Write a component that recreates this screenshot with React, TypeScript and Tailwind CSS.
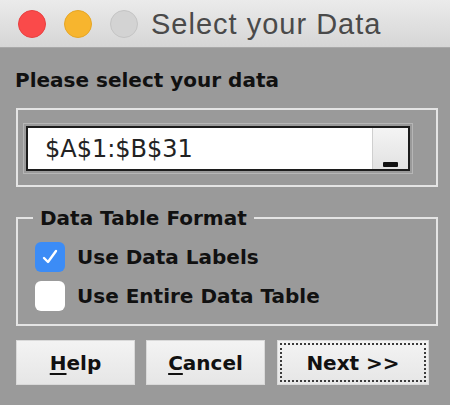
import React from "react";

const sans = { fontFamily: '"DejaVu Sans", Verdana, sans-serif' };

export default function App() {
  return (
    <div className="w-[450px] h-[405px] bg-[#9a9a9a] overflow-hidden" style={sans}>
      {/* Title bar */}
      <div className="h-[48px] flex items-center pl-[18px] bg-gradient-to-b from-[#ebebeb] to-[#d6d6d6] border-b border-[#a8a8a8]">
        <div className="flex items-center gap-[18px]">
          <div className="w-[28px] h-[28px] rounded-full bg-[#fa4a4a] border border-[#e84040]" />
          <div className="w-[28px] h-[28px] rounded-full bg-[#f7b52e] border border-[#e6a625]" />
          <div className="w-[28px] h-[28px] rounded-full bg-[#d3d3d3] border border-[#c4c4c4]" />
        </div>
        <div
          className="ml-[13px] text-[29px] leading-[34px] tracking-[1px] text-[#4a4a4a]"
          style={{ fontFamily: '"Liberation Sans", Arial, sans-serif' }}
        >
          Select your Data
        </div>
      </div>

      {/* Label */}
      <div className="mt-[20px] pl-[15px] text-[20px] leading-[24px] font-bold text-[#111]">
        Please select your data
      </div>

      {/* Range group */}
      <div className="mt-[16px] ml-[16px] w-[422px] h-[79px] border-2 border-[#e4e4e4] pl-[5px] pt-[13px]">
        <div className="w-[390px] border border-[#b6b6b6] p-[2px]">
          <div className="h-[45px] border-2 border-[#1c1c1c] bg-white flex">
            <div className="flex-1 flex items-center pl-[17px] text-[24px] leading-[28px] text-[#222]">
              $A$1:$B$31
            </div>
            <div className="w-[36px] border-l border-[#cfcfcf] bg-gradient-to-b from-[#f4f4f4] to-[#e2e2e2] flex items-end justify-center pb-[2px]">
              <div className="w-[15px] h-[5px] bg-[#111] rounded-[1px]" />
            </div>
          </div>
        </div>
      </div>

      {/* Data Table Format */}
      <fieldset className="mt-[19px] ml-[16px] w-[422px] h-[120px] border-2 border-[#e4e4e4] pl-[17px] pt-[12px]">
        <legend className="ml-[-2px] px-[7px] text-[20px] leading-[24px] font-bold text-[#111]">
          Data Table Format
        </legend>
        <div className="flex flex-col gap-[9px]">
          <div className="flex items-center gap-[12px]">
            <div className="w-[30px] h-[30px] rounded-[6px] bg-[#3c8cf6] flex items-center justify-center">
              <svg width="18" height="18" viewBox="0 0 18 18">
                <path d="M3 10 L7 14 L15 3" fill="none" stroke="white" strokeWidth="2.4" strokeLinecap="round" strokeLinejoin="round" />
              </svg>
            </div>
            <span className="text-[20px] leading-[24px] font-bold text-[#111]">Use Data Labels</span>
          </div>
          <div className="flex items-center gap-[12px]">
            <div className="w-[30px] h-[30px] rounded-[6px] bg-white" />
            <span className="text-[20px] leading-[24px] font-bold text-[#111]">Use Entire Data Table</span>
          </div>
        </div>
      </fieldset>

      {/* Buttons */}
      <div className="mt-[14px] ml-[16px] flex">
        <button className="w-[119px] h-[45px] bg-gradient-to-b from-[#f3f3f3] to-[#e6e6e6] border border-[#d9d9d9] text-[20px] font-bold text-[#111]">
          <span className="underline underline-offset-[3px]">H</span>elp
        </button>
        <button className="ml-[11px] w-[119px] h-[45px] bg-gradient-to-b from-[#f3f3f3] to-[#e6e6e6] border border-[#d9d9d9] text-[20px] font-bold text-[#111]">
          <span className="underline underline-offset-[3px]">C</span>ancel
        </button>
        <button className="ml-[12px] w-[152px] h-[45px] bg-gradient-to-b from-[#f3f3f3] to-[#e6e6e6] border border-[#d9d9d9] p-[2px]">
          <div className="w-full h-full border-2 border-dotted border-[#3a3a3a] flex items-center justify-center text-[20px] font-bold text-[#111]">
            Next &gt;&gt;
          </div>
        </button>
      </div>
    </div>
  );
}
